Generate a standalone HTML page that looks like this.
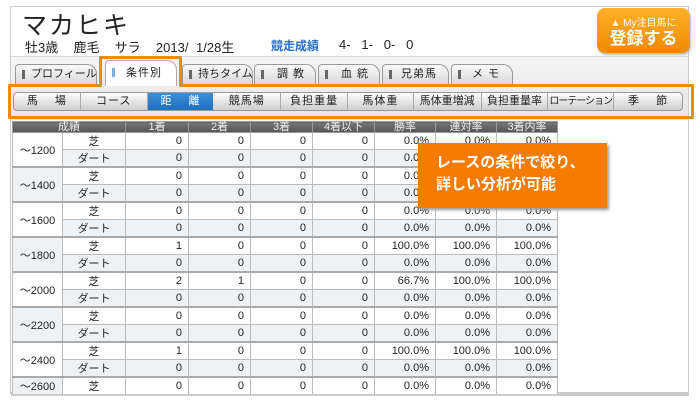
<!DOCTYPE html>
<html><head><meta charset="utf-8"><style>
*{margin:0;padding:0;box-sizing:border-box}
body{width:700px;height:400px;overflow:hidden;background:#fff;font-family:"Liberation Sans","Noto Sans CJK JP",sans-serif;position:relative;color:#222}
.abs{position:absolute}
.frame{left:10px;top:6px;width:679px;height:388px;border:1px solid #ccc;border-bottom:2px solid #ccc}
.tabbg{left:11px;top:56px;width:677px;height:64px;background:linear-gradient(#f4f4f4,#e6e6e6);border-top:1px solid #ddd}
.tab{position:absolute;top:64px;height:20px;background:linear-gradient(#fafafa,#d9d9d9);border:1px solid #999;border-bottom:none;border-radius:4px 10px 0 0;font-size:11px;line-height:19px;padding-left:15px;letter-spacing:1px;white-space:nowrap;overflow:hidden}
.tab:before{content:"";position:absolute;left:6px;top:5px;width:3px;height:9px;background:#666}
.tab.on{background:#fff;top:60px;height:26px;line-height:24px;border-color:#aaa}
.tab.on:before{background:#7aaee0;top:7px}
.bar{left:13px;top:92px;width:670px;height:19px;border:1px solid #999;border-radius:4px;background:linear-gradient(#fdfdfd,#e0e0e0 60%,#cfcfcf);display:flex;overflow:hidden}
.bar div{font-size:11px;line-height:17px;text-align:center;border-right:1px solid #aaa;letter-spacing:1px;color:#222;white-space:nowrap;overflow:hidden}
.bar div.on{background:linear-gradient(#3d8fd6,#1f6fbd);color:#fff;border:none}
table{position:absolute;left:12px;top:121px;border-collapse:collapse;font-size:11px}
td,th{border:1px solid #bbb;height:17px;padding:0 6px}
th{background:linear-gradient(#777,#555);color:#eee;font-weight:normal;height:11px;line-height:10px;font-size:11px;border:1px solid #999}
td{text-align:right;background:#fff;color:#222}
tr.d td{background:#eef2f5}
td.r{text-align:center;background:#fff;width:50px}
td.s{text-align:center;width:63px}
tr.g td{border-top:2px solid #aaa}
.btn{left:597px;top:8px;width:93px;height:45px;border-radius:8px;background:linear-gradient(#ffb02a,#f08a00);box-shadow:1px 2px 2px #bbb;color:#fff;text-align:center}
.call{left:418px;top:143px;width:189px;height:65px;background:#f57c00;color:#fff;font-weight:bold;font-size:15px;line-height:22px;padding:9px 0 0 18px;box-shadow:2px 2px 3px #999}
</style></head><body>
<div class="abs frame"></div>
<div class="abs" style="left:22px;top:6px;font-size:25px;letter-spacing:2px">マカヒキ</div>
<div class="abs" style="left:25px;top:37px;font-size:13px;word-spacing:4px;white-space:pre">牡3歳  鹿毛  サラ  2013/ 1/28生</div>
<div class="abs" style="left:271px;top:37px;font-size:12px;font-weight:bold;color:#2a6fc9">競走成績</div>
<div class="abs" style="left:339px;top:37px;font-size:13px;white-space:pre">4-   1-   0-   0</div>
<div class="abs btn"><div style="font-size:10px;margin-top:6px">▲ My注目馬に</div><div style="font-size:17px;font-weight:bold;line-height:19px">登録する</div></div>
<div class="abs tabbg"></div>
<div class="tab" style="left:15px;width:82px;letter-spacing:0">プロフィール</div>
<div class="tab on" style="left:105px;width:72px;padding-left:20px">条件別</div>
<div class="tab" style="left:182px;width:71px;letter-spacing:0">持ちタイム</div>
<div class="tab" style="left:254px;width:62px;padding-left:22px">調 教</div>
<div class="tab" style="left:318px;width:62px;padding-left:22px">血 統</div>
<div class="tab" style="left:382px;width:67px;padding-left:18px">兄弟馬</div>
<div class="tab" style="left:451px;width:62px;padding-left:20px">メ モ</div>
<div class="abs bar">
<div style="width:67px;word-spacing:12px">馬 場</div><div style="width:67px">コース</div><div class="on" style="width:66px;word-spacing:12px">距 離</div><div style="width:68px">競馬場</div><div style="width:67px">負担重量</div><div style="width:66px">馬体重</div><div style="width:68px;letter-spacing:0">馬体重増減</div><div style="width:67px;letter-spacing:0">負担重量率</div><div style="width:66px;letter-spacing:-1px;font-size:10px">ローテーション</div><div style="width:68px;border:none;word-spacing:12px">季 節</div>
</div>
<svg class="abs" style="left:0;top:0" width="700" height="130"><path d="M9.5 117.5 H692.5 V85.5 H180.5 V57.5 H100.5 V85.5 H9.5 Z" fill="none" stroke="#f28a00" stroke-width="3" stroke-linejoin="round"/></svg>
<table>
<tr><th colspan="2" style="width:113px">成績</th><th style="width:63px">1着</th><th style="width:62px">2着</th><th style="width:62px">3着</th><th style="width:62px">4着以下</th><th style="width:61px">勝率</th><th style="width:61px">連対率</th><th style="width:61px">3着内率</th></tr>
<tr><td class="r" rowspan="2">～1200</td><td class="s">芝</td><td>0</td><td>0</td><td>0</td><td>0</td><td>0.0%</td><td>0.0%</td><td>0.0%</td></tr>
<tr class="d"><td class="s">ダート</td><td>0</td><td>0</td><td>0</td><td>0</td><td>0.0%</td><td>0.0%</td><td>0.0%</td></tr>
<tr class="g"><td class="r" rowspan="2" style="background:#eef2f5">～1400</td><td class="s">芝</td><td>0</td><td>0</td><td>0</td><td>0</td><td>0.0%</td><td>0.0%</td><td>0.0%</td></tr>
<tr class="d"><td class="s">ダート</td><td>0</td><td>0</td><td>0</td><td>0</td><td>0.0%</td><td>0.0%</td><td>0.0%</td></tr>
<tr class="g"><td class="r" rowspan="2">～1600</td><td class="s">芝</td><td>0</td><td>0</td><td>0</td><td>0</td><td>0.0%</td><td>0.0%</td><td>0.0%</td></tr>
<tr class="d"><td class="s">ダート</td><td>0</td><td>0</td><td>0</td><td>0</td><td>0.0%</td><td>0.0%</td><td>0.0%</td></tr>
<tr class="g"><td class="r" rowspan="2" style="background:#eef2f5">～1800</td><td class="s">芝</td><td>1</td><td>0</td><td>0</td><td>0</td><td>100.0%</td><td>100.0%</td><td>100.0%</td></tr>
<tr class="d"><td class="s">ダート</td><td>0</td><td>0</td><td>0</td><td>0</td><td>0.0%</td><td>0.0%</td><td>0.0%</td></tr>
<tr class="g"><td class="r" rowspan="2">～2000</td><td class="s">芝</td><td>2</td><td>1</td><td>0</td><td>0</td><td>66.7%</td><td>100.0%</td><td>100.0%</td></tr>
<tr class="d"><td class="s">ダート</td><td>0</td><td>0</td><td>0</td><td>0</td><td>0.0%</td><td>0.0%</td><td>0.0%</td></tr>
<tr class="g"><td class="r" rowspan="2" style="background:#eef2f5">～2200</td><td class="s">芝</td><td>0</td><td>0</td><td>0</td><td>0</td><td>0.0%</td><td>0.0%</td><td>0.0%</td></tr>
<tr class="d"><td class="s">ダート</td><td>0</td><td>0</td><td>0</td><td>0</td><td>0.0%</td><td>0.0%</td><td>0.0%</td></tr>
<tr class="g"><td class="r" rowspan="2">～2400</td><td class="s">芝</td><td>1</td><td>0</td><td>0</td><td>0</td><td>100.0%</td><td>100.0%</td><td>100.0%</td></tr>
<tr class="d"><td class="s">ダート</td><td>0</td><td>0</td><td>0</td><td>0</td><td>0.0%</td><td>0.0%</td><td>0.0%</td></tr>
<tr class="g"><td class="r" rowspan="2" style="background:#eef2f5">～2600</td><td class="s">芝</td><td>0</td><td>0</td><td>0</td><td>0</td><td>0.0%</td><td>0.0%</td><td>0.0%</td></tr>
</table>
<div class="abs" style="left:11px;top:394px;width:678px;height:6px;background:#fff;border-top:2px solid #ccc"></div>
<div class="abs call">レースの条件で絞り、<br>詳しい分析が可能</div>
</body></html>
